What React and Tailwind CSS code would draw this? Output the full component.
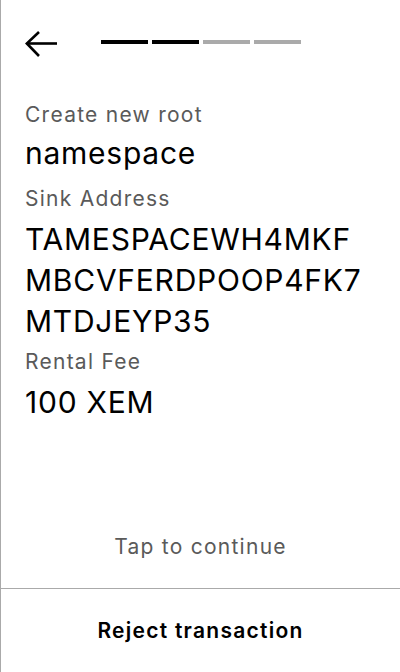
export default function App() {
  const font = { fontFamily: 'Inter, "Noto Sans", sans-serif' };
  return (
    <div
      className="w-[400px] h-[672px] bg-white border-l border-[#aaaaaa] flex flex-col overflow-hidden"
      style={font}
    >
      <div className="flex items-start pt-[31px] pl-6">
        <svg width="32" height="26" viewBox="0 0 32 26" fill="none" stroke="#000" strokeWidth="2.6">
          <path d="M14 1 L1.8 12.5 L14 25" strokeLinecap="butt" strokeLinejoin="miter" />
          <path d="M1.8 12.5 H32" />
        </svg>
        <div className="ml-[44px] mt-[9px] flex gap-1">
          <div className="w-[47px] h-1 bg-black" />
          <div className="w-[47px] h-1 bg-black" />
          <div className="w-[47px] h-1 bg-[#aaaaaa]" />
          <div className="w-[47px] h-1 bg-[#aaaaaa]" />
        </div>
      </div>

      <div className="flex-1 flex flex-col px-6 pt-[44px]">
        <div className="text-[21px] leading-[28px] tracking-[0.06em] text-[#5a5a5a]">Create new root</div>
        <div className="mt-[4px] text-[30px] leading-[41px] tracking-[0.025em] text-black">namespace</div>
        <div className="mt-[11px] text-[21px] leading-[28px] tracking-[0.06em] text-[#5a5a5a]">Sink Address</div>
        <div className="mt-[6px] text-[30px] leading-[41px] tracking-[0.025em] text-black">
          <div>TAMESPACEWH4MKF</div>
          <div>MBCVFERDPOOP4FK7</div>
          <div>MTDJEYP35</div>
        </div>
        <div className="mt-[6px] text-[21px] leading-[28px] tracking-[0.06em] text-[#5a5a5a]">Rental Fee</div>
        <div className="mt-[6px] text-[30px] leading-[41px] tracking-[0.025em] text-black">100 XEM</div>
      </div>

      <div className="pb-[27px] text-center text-[21px] leading-[28px] tracking-[0.06em] text-[#5a5a5a]">Tap to continue</div>
      <div className="h-[84px] border-t border-[#aaaaaa] flex items-center justify-center">
        <span className="text-[21px] leading-[28px] tracking-[0.06em] font-semibold text-black">Reject transaction</span>
      </div>
    </div>
  );
}
